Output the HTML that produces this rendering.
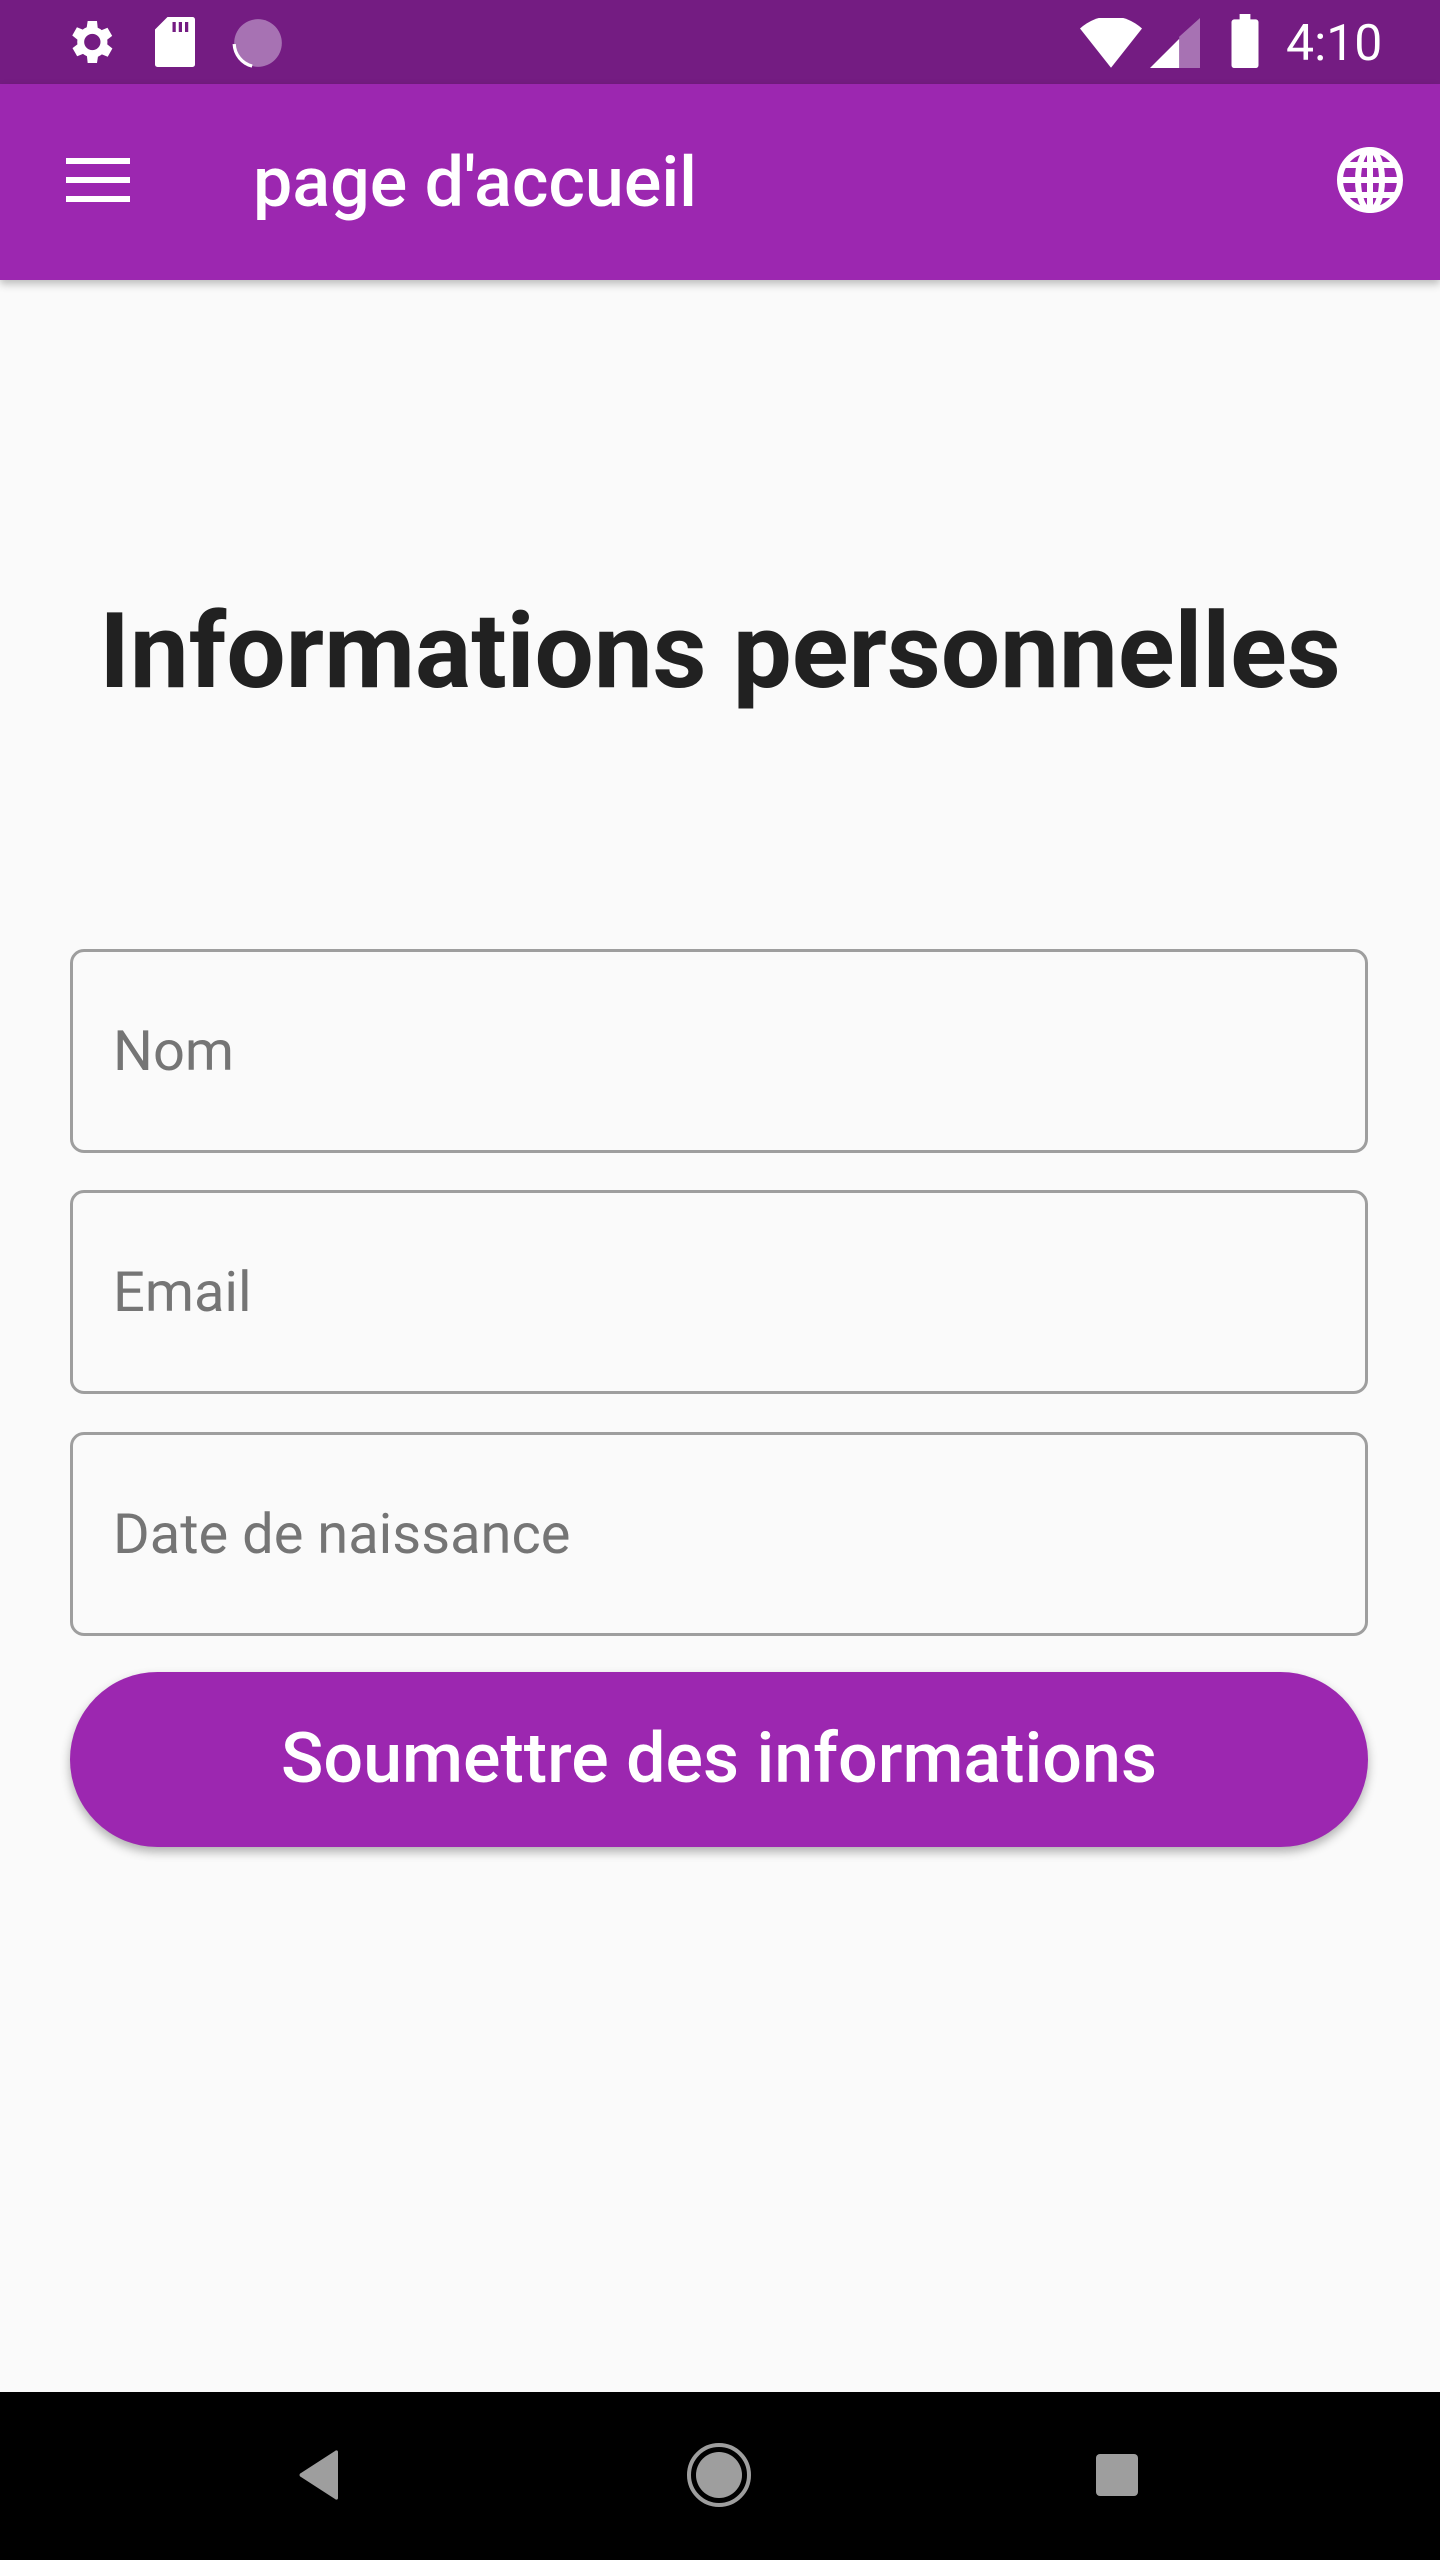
<!DOCTYPE html>
<html><head><meta charset="utf-8"><style>
*{margin:0;padding:0;box-sizing:border-box}
body{width:1440px;height:2560px;background:#fafafa;font-family:"Roboto","Liberation Sans",sans-serif;position:relative;overflow:hidden}
.status{position:absolute;top:0;left:0;width:1440px;height:84px;background:#741c82}
.appbar{position:absolute;top:84px;left:0;width:1440px;height:196px;background:#9c27b0;box-shadow:0 4px 8px rgba(0,0,0,.25)}
.abs{position:absolute}
.field{position:absolute;left:70px;width:1298px;height:204px;border:3px solid #9e9e9e;border-radius:14px}
.field span{position:absolute;left:40px;top:50%;transform:translateY(-50%);font-size:56px;color:#757575}
.btn{position:absolute;left:70px;top:1672px;width:1298px;height:175px;border-radius:88px;background:#9c27b0;box-shadow:0 5px 10px rgba(0,0,0,.3);color:#fff;font-size:70px;font-weight:500;text-align:center;line-height:175px}
.nav{position:absolute;top:2392px;left:0;width:1440px;height:168px;background:#000}
</style></head><body>
<div class="status">
<svg class="abs" style="left:60px;top:14px" width="60" height="56" viewBox="0 0 24 24"><path fill="#fff" d="M19.4 13a7.5 7.5 0 0 0 0-2l2.1-1.6-2-3.5-2.5 1a7 7 0 0 0-1.7-1L15 3h-4l-.4 2.7a7 7 0 0 0-1.7 1l-2.5-1-2 3.5L6.6 11a7.5 7.5 0 0 0 0 2l-2.1 1.6 2 3.5 2.5-1a7 7 0 0 0 1.7 1L11 21h4l.4-2.7a7 7 0 0 0 1.7-1l2.5 1 2-3.5zM13 15.5a3.5 3.5 0 1 1 0-7 3.5 3.5 0 0 1 0 7z"/></svg>
<svg class="abs" style="left:155px;top:17px" width="40" height="50" viewBox="0 0 16 20"><path fill="#fff" d="M5 0h10a1 1 0 0 1 1 1v18a1 1 0 0 1-1 1H1a1 1 0 0 1-1-1V5z"/><rect x="7" y="2" width="1.3" height="4" fill="#741c82"/><rect x="9.5" y="2" width="1.3" height="4" fill="#741c82"/><rect x="12" y="2" width="1.3" height="4" fill="#741c82"/></svg>
<svg class="abs" style="left:232px;top:17px" width="52" height="52" viewBox="0 0 24 24"><circle cx="12" cy="12" r="11" fill="#a772b3"/><circle cx="12" cy="12" r="11" fill="none" stroke="#fff" stroke-width="1.5" stroke-dasharray="14 60" stroke-dashoffset="-20"/></svg>
<svg class="abs" style="left:1080px;top:18px" width="62" height="50" viewBox="0 0 30 24"><path fill="#fff" d="M15 24L0 5a22 22 0 0 1 30 0z"/></svg>
<svg class="abs" style="left:1150px;top:18px" width="50" height="50" viewBox="0 0 24 24"><path fill="#a772b3" d="M24 0v24H14V9z"/><path fill="#fff" d="M14 10v14H0z"/></svg>
<svg class="abs" style="left:1230px;top:14px" width="30" height="54" viewBox="0 0 10 20"><path fill="#fff" d="M3 0h4v2h2a1 1 0 0 1 1 1v16a1 1 0 0 1-1 1H1a1 1 0 0 1-1-1V3a1 1 0 0 1 1-1h2z"/></svg>
<div class="abs" style="left:1286px;top:14px;font-size:50px;color:#fff;line-height:60px">4:10</div>
</div>
<div class="appbar">
<svg class="abs" style="left:66px;top:74px" width="64" height="44" viewBox="0 0 64 44"><rect y="0" width="64" height="6" fill="#fff"/><rect y="19" width="64" height="6" fill="#fff"/><rect y="38" width="64" height="6" fill="#fff"/></svg>
<div class="abs" style="left:253px;top:59px;font-size:70px;color:#fff;font-weight:500;line-height:80px">page d'accueil</div>
<svg class="abs" style="left:1334px;top:60px" width="72" height="72" viewBox="0 0 24 24"><g fill="none" stroke="#fff" stroke-width="2"><circle cx="12" cy="12" r="10"/><ellipse cx="12" cy="12" rx="4" ry="10"/><path d="M2 12h20M3.5 7h17M3.5 17h17M12 2v20"/></g></svg>
</div>
<div class="abs" style="left:0;width:1440px;top:592px;text-align:center;font-size:105px;font-weight:bold;color:#212121;line-height:120px">Informations personnelles</div>
<div class="field" style="top:949px"><span>Nom</span></div>
<div class="field" style="top:1190px"><span>Email</span></div>
<div class="field" style="top:1432px"><span>Date de naissance</span></div>
<div class="btn">Soumettre des informations</div>
<div class="nav">
<svg class="abs" style="left:298px;top:58px" width="42" height="50" viewBox="0 0 42 50"><path fill="#9e9e9e" d="M40 2v46c0 2-2 2-3 1L3 27c-2-1-2-3 0-4L37 1c1-1 3-1 3 1z"/></svg>
<svg class="abs" style="left:687px;top:51px" width="64" height="64" viewBox="0 0 64 64"><circle cx="32" cy="32" r="30" fill="none" stroke="#9e9e9e" stroke-width="4"/><circle cx="32" cy="32" r="23" fill="#9e9e9e"/></svg>
<div class="abs" style="left:1096px;top:62px;width:42px;height:42px;background:#9e9e9e;border-radius:4px"></div>
</div>
</body></html>
